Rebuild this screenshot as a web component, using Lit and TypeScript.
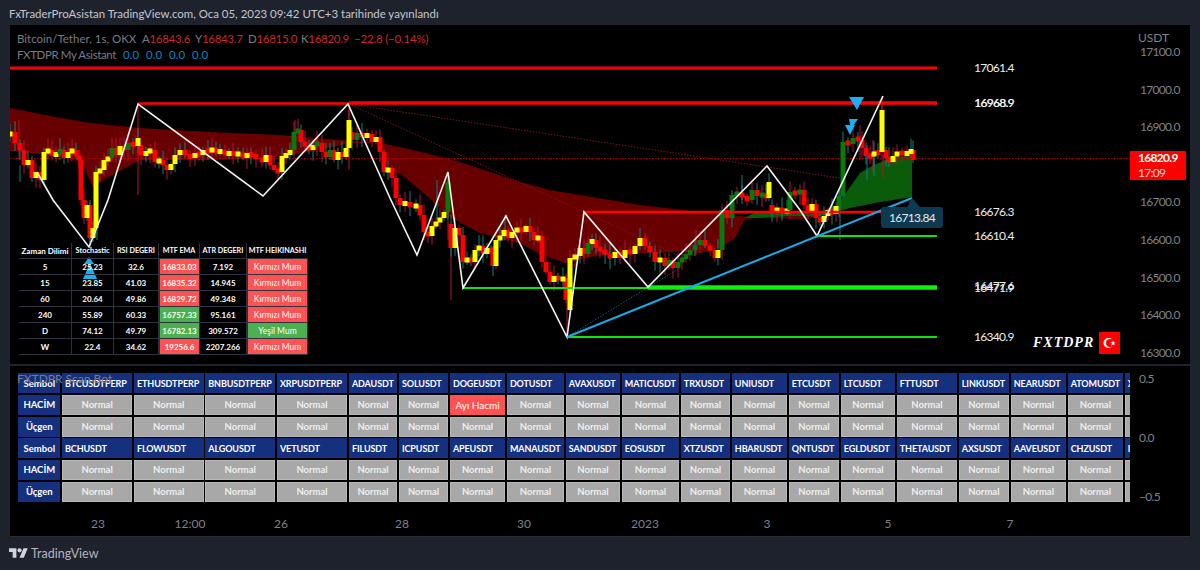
import { LitElement, html, css, svg } from "lit";
import { customElement } from "lit/decorators.js";

const KP: number[][] = [[10,132],[15,143],[20,150],[24,165],[28,160],[32,178],[36,172],[40,180],[44,152],[48,150],[52,156],[56,153],[60,150],[64,158],[68,152],[72,150],[76,156],[79,160],[81,200],[84,218],[87,205],[90,238],[93,228],[96,172],[100,170],[104,160],[108,158],[112,148],[116,155],[120,146],[124,150],[128,143],[133,146],[138,138],[141,155,145],[146,152],[150,150],[155,162],[159,160],[163,165],[167,170],[171,164],[175,155],[180,150],[185,155],[190,158],[195,153],[199,155],[203,150],[208,152],[212,148],[216,153],[220,150],[225,155],[229,152],[233,155],[238,153],[243,157],[247,154],[251,155],[256,158],[262,162],[266,155],[270,165],[274,170],[278,172],[282,156],[286,155],[290,150],[294,132],[298,130],[301,142],[305,146],[309,150],[313,145],[317,143],[322,152],[326,157],[330,150],[334,160],[338,152],[342,157],[346,148],[349,120],[352,140,132],[357,133],[362,137],[367,134],[372,142],[376,137],[380,152],[384,172],[388,168],[392,178],[396,198],[400,205],[405,202],[410,207],[416,205],[420,215],[424,232],[428,236],[432,226],[436,222],[440,218],[444,212],[448,182],[451,248,224],[455,228],[459,235],[463,262],[467,258],[471,262],[475,250],[479,246],[483,254],[487,248],[491,252],[493,266],[496,240],[500,236],[504,230],[508,238],[512,232],[517,228],[521,232],[526,226],[530,232],[534,240],[538,236],[542,262],[546,272],[550,282],[554,276],[558,280],[563,278],[566,300],[570,258,310],[575,256],[580,248],[584,254],[588,243],[592,240],[596,248],[600,250],[605,254],[610,258],[615,252],[620,258],[625,250],[630,254],[635,246],[640,238],[645,246],[650,252],[655,262],[660,258],[665,266],[669,260],[673,268],[678,262],[682,258],[686,255],[690,250],[695,245],[700,240],[705,246],[710,250],[715,258],[718,250],[722,210],[727,218],[732,195],[737,193],[742,197],[747,200],[752,190],[757,196],[762,194],[766,198],[769,182],[772,212,205],[777,208],[782,212],[787,210],[790,192],[795,194],[800,190],[804,205],[808,212],[812,204],[816,218],[820,222],[824,216],[828,210],[832,214],[836,206],[839,196],[843,142],[848,144],[853,138],[858,140],[862,148],[866,156],[870,156],[874,152],[878,153],[882,110,152],[886,158,150],[889,162],[893,156],[897,152],[902,154],[907,153],[911,150],[913,160]];
const GREEN: [number, number][] = [[58,61],[110,113],[126,135],[294,298],[314,318],[326,331],[356,364],[446,449],[586,589],[664,700],[722,765],[790,803],[839,860]];
const SPIKES: [number, number, number, string][] = [[138,104,195,"r"],[349,108,170,"r"],[295,120,150,"r"],[882,96,112,"r"],[90,200,248,"t"],[19,120,160,"r"],[20,165,182,"t"],[97,218,240,"t"],[567,278,337,"r"],[883,155,178,"r"],[873,140,172,"r"],[867,145,180,"t"],[451,230,300,"r"],[437,180,220,"t"],[505,215,240,"t"],[696,230,255,"r"],[742,175,200,"t"],[860,125,160,"r"],[448,190,240,"r"],[840,190,240,"t"],[874,150,176,"t"]];

function candlePaths() {
  let seed = 12345;
  const rnd = () => ((seed = (seed * 1103515245 + 12345) & 0x7fffffff) / 0x7fffffff);
  const d: Record<string, string> = { r: "", y: "", g: "", wr: "", wt: "" };
  KP.forEach(([x, y, open], i) => {
    const prev = open ?? (i ? KP[i - 1][1] : y + 4);
    const up = y < prev;
    let top = Math.min(y, prev);
    let h = Math.abs(y - prev);
    if (h < 5) { top -= (5 - h) / 2; h = 5; }
    const w = 5;
    const key = !up ? "r" : GREEN.some(([a, b]) => x >= a && x <= b) ? "g" : "y";
    d[key] += `M${x - w / 2} ${top}h${w}v${h}h${-w}z`;
    const t = top - 2 - rnd() * 9;
    const b = top + h + 2 + rnd() * 9;
    d[rnd() > 0.55 ? "wt" : "wr"] += `M${x} ${t.toFixed(1)}V${b.toFixed(1)}`;
  });
  SPIKES.forEach(([x, a, b, c]) => (d[c === "r" ? "wr" : "wt"] += `M${x} ${a}V${b}`));
  return d;
}
const CANDLES = candlePaths();

const pts = (a: number[][]) => a.map((p) => p.join(",")).join(" ");
const CLOUD_RED = pts([[10,108],[50,116],[90,123],[140,128],[210,132],[280,135],[340,140],[380,143],[400,147],[430,154],[460,162],[490,172],[520,182],[550,190],[580,195],[640,205],[700,212],[730,215],[760,218],[800,219],[818,216],[835,211],[835,214],[790,216],[745,219],[735,238],[720,248],[700,253],[680,251],[660,253],[620,253],[590,257],[565,263],[540,254],[520,243],[500,238],[480,233],[450,217],[420,190],[400,173],[392,172],[377,143],[350,143],[320,150],[270,158],[200,160],[140,160],[118,172],[100,182],[93,187],[80,159],[40,154],[10,151]]);
const CLOUD_GREEN = pts([[745,218],[755,212],[790,211],[815,214],[838,205],[848,190],[860,173],[872,166],[885,160],[898,157],[912,155],[912,197],[880,202],[850,208],[820,216],[790,216],[760,218]]);
const ZIG = pts([[37,172],[53,200],[89,247],[108,200],[138,104],[263,196],[348,104],[390,198],[417,255],[448,172],[463,288],[506,216],[567,337],[584,212],[648,287],[767,166],[800,210],[817,236],[883,96]]);

const chartLabels: [number, number, string][] = [[974,72,"17061.4"],[974,107,"16968.9"],[974.4,107,"16968.9"],[974,216,"16676.3"],[974,240,"16610.4"],[974,290,"16477.6"],[974,292,"16471.9"],[974,341,"16340.9"]];

const STARTS = [18.3,62,134,205.3,277,349,399,450,507,566,622,681,732,789,841,897,959,1011,1068,1125,1190];
const R1 = ["BTCUSDTPERP","ETHUSDTPERP","BNBUSDTPERP","XRPUSDTPERP","ADAUSDT","SOLUSDT","DOGEUSDT","DOTUSDT","AVAXUSDT","MATICUSDT","TRXUSDT","UNIUSDT","ETCUSDT","LTCUSDT","FTTUSDT","LINKUSDT","NEARUSDT","ATOMUSDT","XLMUSDT"];
const R2 = ["BCHUSDT","FLOWUSDT","ALGOUSDT","VETUSDT","FILUSDT","ICPUSDT","APEUSDT","MANAUSDT","SANDUSDT","EOSUSDT","XTZUSDT","HBARUSDT","QNTUSDT","EGLDUSDT","THETAUSDT","AXSUSDT","AAVEUSDT","CHZUSDT","IOTAUSDT"];

const MTF = [
  ["5","25.23","32.6","16833.03","r","7.192","Kırmızı Mum","r"],
  ["15","23.85","41.03","16835.32","r","14.945","Kırmızı Mum","r"],
  ["60","20.64","49.86","16829.72","r","49.348","Kırmızı Mum","r"],
  ["240","55.89","60.33","16757.33","g","95.161","Kırmızı Mum","r"],
  ["D","74.12","49.79","16782.13","g","309.572","Yeşil Mum","g"],
  ["W","22.4","34.62","19256.6","r","2207.266","Kırmızı Mum","r"],
];
const PRICE = ["17100.0","17000.0","16900.0","","16700.0","16600.0","16500.0","16400.0","16300.0"];
const TIME: [number, string][] = [[98,"23"],[190,"12:00"],[281,"26"],[402,"28"],[524,"30"],[645,"2023"],[767,"3"],[888,"5"],[1010,"7"]];

@customElement("app-root")
export class AppRoot extends LitElement {
  static styles = css`
    :host { display: block; width: 1200px; height: 570px; background: #1e222d; overflow: hidden; font-family: "Lato", "Noto Sans", sans-serif; }
    .head { height: 25px; padding-left: 9px; box-sizing: border-box; line-height: 28px; font-size: 11.45px; color: #c4c7cf; white-space: nowrap; }
    .panel { margin: 0 10px; height: 511px; background: #000; display: flex; flex-direction: column; box-shadow: 0 1px 0 #2a2e39; }
    .row { display: flex; }
    .plot { width: 1120px; position: relative; }
    .axis { width: 60px; position: relative; color: #7f828b; font-size: 12px; letter-spacing: -0.7px; }
    .main { height: 339px; }
    .main svg.chart { display: block; width: 1120px; height: 339px; }
    .chart text { font-size: 12px; letter-spacing: -0.7px; }
    .sep { height: 2px; background: #1e222d; }
    .sub { height: 145px; }
    .legend { position: absolute; left: 7px; top: 6px; font-size: 11.5px; color: #787b86; line-height: 16px; white-space: nowrap; }
    .lrow { display: flex; }
    .lrow span { flex: none; }
    .sym { width: 125px; }
    .ohlc { width: 53px; letter-spacing: -0.3px; }
    .ohlc b { font-weight: 400; color: #c9272f; }
    .chg { color: #c9272f; letter-spacing: -0.2px; }
    .ind { width: 106px; letter-spacing: -0.4px; }
    .iv { color: #0a85c7; width: 23px; }
    .ptick { height: 37.6px; line-height: 37.6px; padding-left: 10px; }
    .ptitle { height: 8px; padding-left: 8px; line-height: 26px; font-size: 12px; letter-spacing: 0; }
    .cur { position: absolute; left: 0; top: 126px; width: 56px; height: 29px; background: #f00; border-radius: 1px; color: #fff; line-height: 14.5px; padding-left: 8px; box-sizing: border-box; font-weight: 700; }
    .cur span { display: block; font-weight: 400; color: #ffd5d5; }
    .stick { height: 59px; line-height: 59px; padding-left: 9px; }
    .sticks { margin-top: -17.5px; }
    .mtf { position: absolute; left: 9px; top: 218px; display: grid; grid-template-columns: 53px 42px 45px 41px 47px 61px; grid-auto-rows: 16px; font-size: 8px; font-weight: 700; color: #fff; }
    .mc { display: flex; align-items: center; justify-content: center; border-right: 1px solid #2e323d; border-bottom: 1px solid #2e323d; box-sizing: border-box; white-space: nowrap; overflow: hidden; }
    .mc.last { border-right: 0; }
    .mc.u { font-size: 7.2px; }
    .mc.st { font-size: 7.4px; }
    .mc.k { font-size: 8.5px; font-weight: 400; }
    .mc.r { background: #ff5252; border: 1px solid #2e323d; border-top: 0; }
    .mc.g { background: #4caf50; border: 1px solid #2e323d; border-top: 0; }
    .logo { position: absolute; left: 1023px; top: 307px; display: flex; align-items: center; gap: 5px; color: #fff; font: italic 700 14px "Liberation Serif", serif; letter-spacing: 1px; }
    .logo svg { display: block; width: 21px; height: 22px; }
    .scan { margin: 7.3px 0 0 8.3px; display: grid; grid-auto-rows: 20px; row-gap: 1.67px; column-gap: 1.7px; width: 1111.7px; overflow: hidden; font-size: 9.5px; font-weight: 700; color: #fff; }
    .c { box-sizing: border-box; display: flex; align-items: center; justify-content: center; white-space: nowrap; overflow: hidden; }
    .c.b { background: #14307f; }
    .c.s { justify-content: flex-start; padding-left: 3px; font-size: 9px; letter-spacing: -0.1px; }
    .c.n { background: #a8a8a8; border: 1px solid #b8b8b8; color: #eee; }
    .c.v { background: #ff5252; font-weight: 400; font-size: 10px; }
    .bot { position: absolute; left: 7px; top: 5px; color: #787b86; font-size: 12px; }
    .time { height: 25px; position: relative; color: #7f828b; font-size: 12px; }
    .time span { position: absolute; top: 5px; transform: translateX(-50%); }
    .foot { height: 34px; display: flex; align-items: center; gap: 3px; padding-left: 9px; color: #b2b5be; font-size: 12.5px; }
    .foot svg { width: 19px; height: 15px; display: block; }
  `;

  private chart() {
    return svg`
      <svg class="chart" viewBox="10 25 1120 339">
        <polygon points=${CLOUD_RED} fill="#680000"/>
        <polygon points=${CLOUD_GREEN} fill="#0a5c0a"/>
        <line x1="10" y1="158.5" x2="1130" y2="158.5" stroke="#b00000" stroke-dasharray="1.5 1.5"/>
        <line x1="349" y1="104" x2="840" y2="178" stroke="#7d1616" stroke-dasharray="1.5 1.5"/>
        <line x1="349" y1="104" x2="680" y2="256" stroke="#7d1616" stroke-dasharray="1.5 1.5"/>
        <line x1="567" y1="337" x2="680" y2="268" stroke="#0e5f86" stroke-dasharray="1.5 1.5"/>
        <path d=${CANDLES.wr} stroke="#b5103a" fill="none"/>
        <path d=${CANDLES.wt} stroke="#12807c" fill="none"/>
        <path d=${CANDLES.r} fill="#f00"/>
        <path d=${CANDLES.y} fill="#ff0"/>
        <path d=${CANDLES.g} fill="#067a0c"/>
        <g fill="none" stroke="#f00">
          <line x1="10" y1="68" x2="937" y2="68" stroke-width="3"/>
          <line x1="138" y1="103.5" x2="349" y2="103.5" stroke-width="2.4"/>
          <line x1="349" y1="103" x2="937" y2="103" stroke-width="3.6"/>
          <line x1="583" y1="212" x2="937" y2="212" stroke-width="2.6"/>
        </g>
        <g fill="none" stroke="#0f0">
          <line x1="817" y1="236" x2="937" y2="236" stroke-width="2.2" stroke="#0ce40c"/>
          <line x1="463" y1="288" x2="648" y2="288" stroke-width="2" stroke="#0ce40c"/>
          <line x1="648" y1="287.5" x2="937" y2="287.5" stroke-width="4.4" stroke="#0cf00c"/>
          <line x1="567" y1="337" x2="937" y2="337" stroke-width="2.2" stroke="#0ce40c"/>
        </g>
        <polyline points=${ZIG} fill="none" stroke="#f4f4f4" stroke-width="1.6"/>
        <line x1="567" y1="337" x2="912" y2="198" stroke="#1da7e6" stroke-width="2"/>
        <g fill="#1eaef5">
          <polygon points="89,257 84,264 94,264"/>
          <polygon points="90,263 83,279 97,279"/>
          <polygon points="849,97 864,97 857,110"/>
          <polygon points="849,119 858,119 851,129"/>
          <polygon points="845,125 855,125 850,135"/>
        </g>
        <path d="M884 207h23l5-9 8 9h20a3 3 0 0 1 3 3v15a3 3 0 0 1-3 3h-56a3 3 0 0 1-3-3v-15a3 3 0 0 1 3-3z" fill="#0d3a50"/>
        <text x="889" y="222" fill="#e4eaee">16713.84</text>
        <g fill="#eee">
          ${chartLabels.map(([x, y, t]) => svg`<text x=${x} y=${y}>${t}</text>`)}
        </g>
      </svg>`;
  }

  render() {
    const cols = STARTS.slice(1).map((s, i) => `${(s - STARTS[i] - 1.7).toFixed(1)}px`).join(" ");
    const lastCol = R1.length - 1;
    const gray = (doge = false) => R1.map((_, i) => doge && i === 6
      ? html`<div class="c v">Ayı Hacmi</div>`
      : html`<div class="c n">${i === lastCol ? "" : "Normal"}</div>`);
    const syms = (r: string[]) => r.map((s) => html`<div class="c b s">${s}</div>`);
    const head = (t: string) => html`<div class="c b">${t}</div>`;
    const heads: [string, string][] = [["Zaman Dilimi",""],["Stochastic","st"],["RSI DEGERI","u"],["MTF EMA","u"],["ATR DEGERI","u"],["MTF HEIKINASHI","u last"]];
    return html`
      <div class="head">FxTraderProAsistan TradingView.com, Oca 05, 2023 09:42 UTC+3 tarihinde yayınlandı</div>
      <div class="panel">
        <div class="row main">
          <div class="plot">
            ${this.chart()}
            <div class="legend">
              <div class="lrow">
                <span class="sym">Bitcoin/Tether, 1s, OKX</span>
                <span class="ohlc">A<b>16843.6</b></span><span class="ohlc">Y<b>16843.7</b></span><span class="ohlc">D<b>16815.0</b></span><span class="ohlc">K<b>16820.9</b></span>
                <span class="chg">−22.8 (−0.14%)</span>
              </div>
              <div class="lrow">
                <span class="ind">FXTDPR My Asistant</span>
                <span class="iv">0.0</span><span class="iv">0.0</span><span class="iv">0.0</span><span class="iv">0.0</span>
              </div>
            </div>
            <div class="mtf">
              ${heads.map(([h, c]) => html`<div class="mc ${c}">${h}</div>`)}
              ${MTF.map((r) => html`
                <div class="mc">${r[0]}</div><div class="mc">${r[1]}</div><div class="mc">${r[2]}</div>
                <div class="mc ${r[4]}">${r[3]}</div><div class="mc">${r[5]}</div>
                <div class="mc last k ${r[7]}">${r[6]}</div>`)}
            </div>
            <div class="logo">
              <span>FXTDPR</span>
              <svg viewBox="0 0 21 22">
                <rect width="21" height="22" fill="#f00"/>
                <circle cx="9.5" cy="11" r="5" fill="#fff"/>
                <circle cx="11" cy="11" r="4" fill="#f00"/>
                <polygon points="14,8.6 14.7,10.3 16.5,10.4 15.1,11.6 15.6,13.4 14,12.4 12.4,13.4 12.9,11.6 11.5,10.4 13.3,10.3" fill="#fff"/>
              </svg>
            </div>
          </div>
          <div class="axis">
            <div class="ptitle">USDT</div>
            ${PRICE.map((p) => html`<div class="ptick">${p}</div>`)}
            <div class="cur">16820.9<span>17:09</span></div>
          </div>
        </div>
        <div class="sep"></div>
        <div class="row sub">
          <div class="plot">
            <div class="scan" style="grid-template-columns:${cols}">
              ${head("Sembol")}${syms(R1)}
              ${head("HACİM")}${gray(true)}
              ${head("Üçgen")}${gray()}
              ${head("Sembol")}${syms(R2)}
              ${head("HACİM")}${gray()}
              ${head("Üçgen")}${gray()}
            </div>
            <div class="bot">FXTDPR Scan Bot</div>
          </div>
          <div class="axis">
            <div class="sticks">
              <div class="stick">0.5</div><div class="stick">0.0</div><div class="stick">−0.5</div>
            </div>
          </div>
        </div>
        <div class="time">
          ${TIME.map(([x, t]) => html`<span style="left:${x - 10}px">${t}</span>`)}
        </div>
      </div>
      <div class="foot">
        <svg viewBox="0 0 36 28"><path fill="#d1d4dc" d="M14 22H7V11H0V4h14v18zM28 22h-8l7.5-18h8L28 22z"/><circle fill="#d1d4dc" cx="20" cy="8" r="4"/></svg>
        <span>TradingView</span>
      </div>
    `;
  }
}
